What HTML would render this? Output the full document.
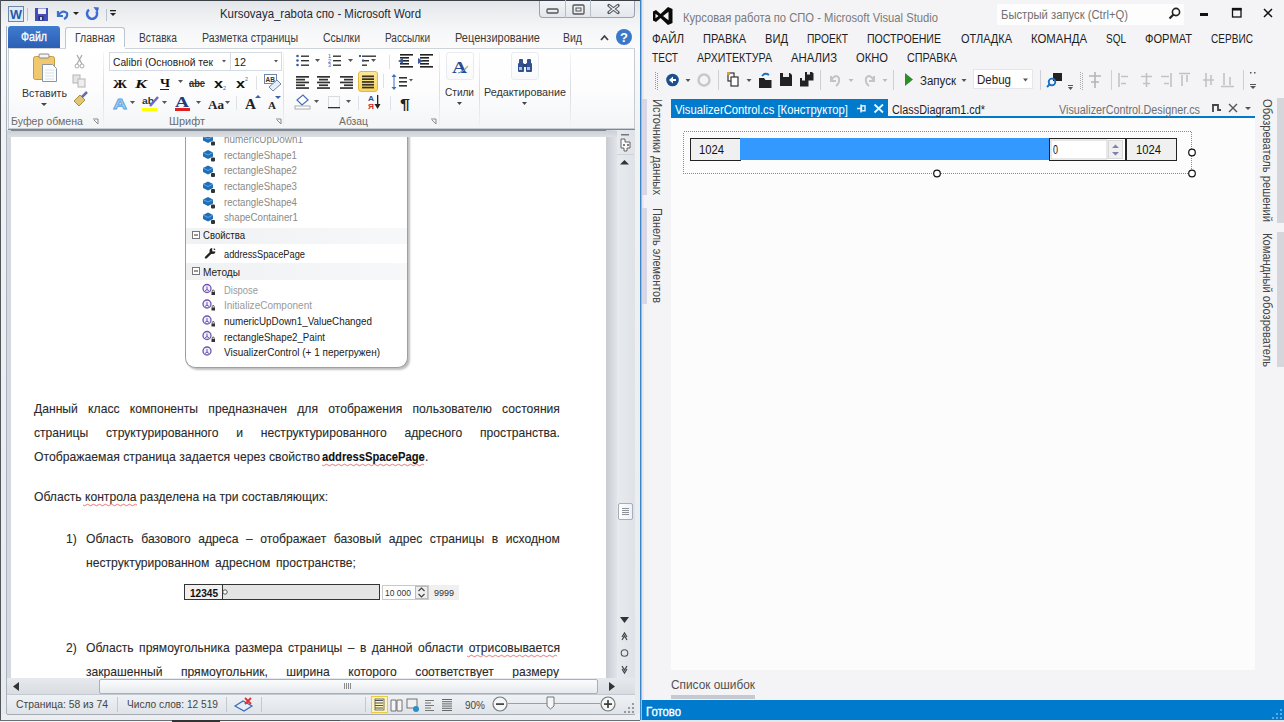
<!DOCTYPE html>
<html><head><meta charset="utf-8">
<style>
*{margin:0;padding:0;box-sizing:border-box}
html,body{width:1284px;height:722px;overflow:hidden;background:#fff;font-family:"Liberation Sans",sans-serif}
.a{position:absolute}
svg{position:absolute;left:0;top:0}
</style></head><body>
<div class="a" style="left:0px;top:0px;width:641px;height:722px;background:linear-gradient(#e3e6e9,#f6f7f8 30px,#fbfbfc 48px,#f0f2f4 130px,#e8ebee);"></div>
<div class="a" style="left:0px;top:0px;width:641px;height:1px;background:#3a4048"></div>
<div class="a" style="left:0px;top:0px;width:1px;height:722px;background:#50565c"></div>
<div class="a" style="left:6px;top:26px;width:1px;height:693px;background:#a9b2bd"></div>
<div class="a" style="left:539px;top:1px;width:96px;height:17px;background:linear-gradient(#f2f4f7,#e3e7ec);border:1px solid #9aa4b0;border-top:none;border-radius:0 0 4px 4px"></div>
<div class="a" style="left:565px;top:0px;width:1px;height:18px;background:#b5bdc7"></div>
<div class="a" style="left:590px;top:0px;width:1px;height:18px;background:#b5bdc7"></div>
<div class="a" style="left:27px;top:8px;width:1px;height:13px;background:#b9c1cb"></div>
<div class="a" style="left:106px;top:9px;width:1px;height:12px;background:#b9c1cb"></div>
<div class="a" style="left:8px;top:26px;width:52px;height:22px;background:linear-gradient(#3f7bd0,#2b5fb4);border-radius:3px 3px 0 0"></div>
<div class="a" style="left:65px;top:27px;width:60px;height:22px;background:linear-gradient(#fafbfc,#ffffff);border:1px solid #bcc5d0;border-bottom:none;border-radius:3px 3px 0 0"></div>
<div class="a" style="left:8px;top:48px;width:627px;height:81px;background:linear-gradient(#ffffff,#fdfdfe 50%,#f3f5f7);border:1px solid #c6ccd3;border-top:1px solid #cfd4da"></div>
<div class="a" style="left:8px;top:129px;width:627px;height:1.5px;background:#80868e"></div>
<div class="a" style="left:65.5px;top:47px;width:59px;height:2.5px;background:#fff"></div>
<div class="a" style="left:103px;top:52px;width:1px;height:75px;background:linear-gradient(#f4f6f8,#d7dde4 50%,#f0f2f5)"></div>
<div class="a" style="left:283px;top:52px;width:1px;height:75px;background:linear-gradient(#f4f6f8,#d7dde4 50%,#f0f2f5)"></div>
<div class="a" style="left:439px;top:52px;width:1px;height:75px;background:linear-gradient(#f4f6f8,#d7dde4 50%,#f0f2f5)"></div>
<div class="a" style="left:479px;top:52px;width:1px;height:75px;background:linear-gradient(#f4f6f8,#d7dde4 50%,#f0f2f5)"></div>
<div class="a" style="left:570px;top:52px;width:1px;height:75px;background:linear-gradient(#f4f6f8,#d7dde4 50%,#f0f2f5)"></div>
<div class="a" style="left:109px;top:52px;width:122px;height:19px;background:#fff;border:1px solid #d5dbe2"></div>
<div class="a" style="left:231px;top:52px;width:51px;height:19px;background:#fff;border:1px solid #d5dbe2;border-left:none"></div>
<div class="a" style="left:160px;top:89px;width:9px;height:1px;background:#222"></div>
<div class="a" style="left:189px;top:83px;width:16px;height:1px;background:#333"></div>
<div class="a" style="left:256px;top:76px;width:1px;height:14px;background:#dde2e8"></div>
<div class="a" style="left:142px;top:108px;width:15px;height:3px;background:#ffff00"></div>
<div class="a" style="left:175px;top:108px;width:15px;height:3px;background:#e02020"></div>
<div class="a" style="left:236px;top:96px;width:1px;height:14px;background:#dde2e8"></div>
<div class="a" style="left:389px;top:55px;width:1px;height:14px;background:#dde2e8"></div>
<div class="a" style="left:358px;top:71px;width:20px;height:21px;background:linear-gradient(#fde89a,#f9d660);border:1px solid #e2b93d;border-radius:3px"></div>
<div class="a" style="left:383px;top:74px;width:1px;height:14px;background:#dde2e8"></div>
<div class="a" style="left:358px;top:96px;width:1px;height:14px;background:#dde2e8"></div>
<div class="a" style="left:390px;top:96px;width:1px;height:14px;background:#dde2e8"></div>
<div class="a" style="left:446px;top:52px;width:28px;height:28px;background:linear-gradient(#fff,#f8f9fb);border:1px solid #e8ebef;border-radius:3px"></div>
<div class="a" style="left:511px;top:52px;width:28px;height:28px;background:linear-gradient(#fff,#f8f9fb);border:1px solid #e8ebef;border-radius:3px"></div>
<div class="a" style="left:7px;top:130px;width:4px;height:548px;background:#d5d9df"></div>
<div class="a" style="left:11px;top:137px;width:595px;height:541px;background:#fff"></div>
<div class="a" style="left:606px;top:130px;width:11px;height:548px;background:linear-gradient(90deg,#c8ccd2,#e1e4e8)"></div>
<div class="a" style="left:617px;top:130px;width:18px;height:548px;background:linear-gradient(90deg,#e7eaee,#dfe3e8)"></div>
<div class="a" style="left:617px;top:154px;width:17px;height:1px;background:#d0d4d9"></div>
<div class="a" style="left:618px;top:503px;width:15px;height:17px;background:linear-gradient(90deg,#fff,#eef1f4);border:1px solid #a5adb8;border-radius:2px"></div>
<div class="a" style="left:185px;top:134px;width:223px;height:234px;background:#fff;border:1px solid #9aa0a6;border-top:none;border-radius:0 0 10px 10px;box-shadow:2px 2px 2px rgba(0,0,0,0.25)"></div>
<div class="a" style="left:186px;top:228px;width:221px;height:16px;background:linear-gradient(90deg,#f0f1f3,#f7f8f9)"></div>
<div class="a" style="left:186px;top:263px;width:221px;height:17px;background:linear-gradient(90deg,#f0f1f3,#f7f8f9)"></div>
<div class="a" style="left:34px;top:402.33px;width:571.74px;font-size:13.2px;line-height:13.2px;white-space:nowrap;display:flex;justify-content:space-between;color:#2a2a2a;transform:scaleX(0.92);transform-origin:0 0;-webkit-text-stroke:0.1px #2a2a2a"><span>Данный</span><span>класс</span><span>компоненты</span><span>предназначен</span><span>для</span><span>отображения</span><span>пользователю</span><span>состояния</span></div>
<div class="a" style="left:34px;top:426.33px;width:571.74px;font-size:13.2px;line-height:13.2px;white-space:nowrap;display:flex;justify-content:space-between;color:#2a2a2a;transform:scaleX(0.92);transform-origin:0 0;-webkit-text-stroke:0.1px #2a2a2a"><span>страницы</span><span>структурированного</span><span>и</span><span>неструктурированного</span><span>адресного</span><span>пространства.</span></div>
<div class="a" style="left:34px;top:450.33px;width:308.86px;font-size:13.2px;line-height:13.2px;white-space:nowrap;color:#2a2a2a;font-weight:normal;transform:scaleX(0.926);transform-origin:0 0;-webkit-text-stroke:0.1px #2a2a2a">Отображаемая страница задается через свойство</div>
<div class="a" style="left:322px;top:450.33px;width:121.18px;font-size:13.2px;line-height:13.2px;white-space:nowrap;color:#111;font-weight:bold;transform:scaleX(0.85);transform-origin:0 0;-webkit-text-stroke:0.1px #111">addressSpacePage</div>
<div class="a" style="left:425px;top:450.33px;width:3.26px;font-size:13.2px;line-height:13.2px;white-space:nowrap;color:#2a2a2a;font-weight:normal;transform:scaleX(0.92);transform-origin:0 0;-webkit-text-stroke:0.1px #2a2a2a">.</div>
<div class="a" style="left:34px;top:490.33px;width:319.57px;font-size:13.2px;line-height:13.2px;white-space:nowrap;color:#2a2a2a;font-weight:normal;transform:scaleX(0.92);transform-origin:0 0;-webkit-text-stroke:0.1px #2a2a2a">Область контрола разделена на три составляющих:</div>
<div class="a" style="left:66px;top:531.83px;width:10.87px;font-size:13.2px;line-height:13.2px;white-space:nowrap;color:#2a2a2a;font-weight:normal;transform:scaleX(0.92);transform-origin:0 0;-webkit-text-stroke:0.1px #2a2a2a">1)</div>
<div class="a" style="left:86px;top:531.83px;width:515.22px;font-size:13.2px;line-height:13.2px;white-space:nowrap;display:flex;justify-content:space-between;color:#2a2a2a;transform:scaleX(0.92);transform-origin:0 0;-webkit-text-stroke:0.1px #2a2a2a"><span>Область</span><span>базового</span><span>адреса</span><span>–</span><span>отображает</span><span>базовый</span><span>адрес</span><span>страницы</span><span>в</span><span>исходном</span></div>
<div class="a" style="left:86px;top:556.33px;width:293.48px;font-size:13.2px;line-height:13.2px;white-space:nowrap;display:flex;justify-content:space-between;color:#2a2a2a;transform:scaleX(0.92);transform-origin:0 0;-webkit-text-stroke:0.1px #2a2a2a"><span>неструктурированном</span><span>адресном</span><span>пространстве;</span></div>
<div class="a" style="left:66px;top:640.83px;width:10.87px;font-size:13.2px;line-height:13.2px;white-space:nowrap;color:#2a2a2a;font-weight:normal;transform:scaleX(0.92);transform-origin:0 0;-webkit-text-stroke:0.1px #2a2a2a">2)</div>
<div class="a" style="left:86px;top:640.83px;width:515.22px;font-size:13.2px;line-height:13.2px;white-space:nowrap;display:flex;justify-content:space-between;color:#2a2a2a;transform:scaleX(0.92);transform-origin:0 0;-webkit-text-stroke:0.1px #2a2a2a"><span>Область</span><span>прямоугольника</span><span>размера</span><span>страницы</span><span>–</span><span>в</span><span>данной</span><span>области</span><span>отрисовывается</span></div>
<div class="a" style="left:86px;top:664.83px;width:514.13px;font-size:13.2px;line-height:13.2px;white-space:nowrap;display:flex;justify-content:space-between;color:#2a2a2a;transform:scaleX(0.92);transform-origin:0 0;-webkit-text-stroke:0.1px #2a2a2a"><span>закрашенный</span><span>прямоугольник,</span><span>ширина</span><span>которого</span><span>соответствует</span><span>размеру</span></div>
<div class="a" style="left:184px;top:584px;width:196px;height:16px;background:#e4e4e4;border:1px solid #333"></div>
<div class="a" style="left:184px;top:584px;width:39px;height:16px;background:#f0f0f0;border:1px solid #333"></div>
<div class="a" style="left:382px;top:585px;width:47px;height:15px;background:#fff;border:1px solid #c9c9c9"></div>
<div class="a" style="left:415px;top:586px;width:13px;height:13px;background:#eee;border:1px solid #bbb"></div>
<div class="a" style="left:429px;top:585px;width:30px;height:15px;background:#f0f0f0"></div>
<div class="a" style="left:7px;top:678px;width:628px;height:16px;background:linear-gradient(#e6e9ed,#d9dde2)"></div>
<div class="a" style="left:99px;top:679px;width:499px;height:15px;background:linear-gradient(#fbfcfd,#e7eaee);border:1px solid #a9b0b9;border-radius:2px"></div>
<div class="a" style="left:344px;top:683px;width:1px;height:6px;background:#8a8a8a"></div>
<div class="a" style="left:346px;top:683px;width:1px;height:6px;background:#8a8a8a"></div>
<div class="a" style="left:348px;top:683px;width:1px;height:6px;background:#8a8a8a"></div>
<div class="a" style="left:350px;top:683px;width:1px;height:6px;background:#8a8a8a"></div>
<div class="a" style="left:7px;top:694px;width:628px;height:20px;background:linear-gradient(#eff2f5,#dfe3e8);border-top:1px solid #c2c9d1"></div>
<div class="a" style="left:117px;top:697px;width:1px;height:15px;background:#c3c9d0"></div>
<div class="a" style="left:226px;top:697px;width:1px;height:15px;background:#c3c9d0"></div>
<div class="a" style="left:365px;top:697px;width:1px;height:15px;background:#c3c9d0"></div>
<div class="a" style="left:261px;top:697px;width:1px;height:15px;background:#c3c9d0"></div>
<div class="a" style="left:371px;top:696px;width:17px;height:17px;background:#fbf3c0;border:1px solid #e8cc3e"></div>
<div class="a" style="left:508px;top:703px;width:92px;height:1px;background:#9aa0a8"></div>
<div class="a" style="left:632px;top:703px;width:1.5px;height:1.5px;background:#999"></div>
<div class="a" style="left:632px;top:707px;width:1.5px;height:1.5px;background:#999"></div>
<div class="a" style="left:628px;top:707px;width:1.5px;height:1.5px;background:#999"></div>
<div class="a" style="left:632px;top:711px;width:1.5px;height:1.5px;background:#999"></div>
<div class="a" style="left:628px;top:711px;width:1.5px;height:1.5px;background:#999"></div>
<div class="a" style="left:624px;top:711px;width:1.5px;height:1.5px;background:#999"></div>
<div class="a" style="left:1px;top:714px;width:639px;height:6px;background:#eceef1"></div>
<div class="a" style="left:7px;top:713.5px;width:628px;height:1px;background:#a5acb4"></div>
<div class="a" style="left:0px;top:720px;width:641px;height:1px;background:#6a7077"></div>
<div class="a" style="left:0px;top:721px;width:641px;height:1px;background:#f4f5f7"></div>
<div class="a" style="left:172px;top:720px;width:48px;height:2px;background:#333"></div>
<div class="a" style="left:220px;top:720px;width:120px;height:1px;background:#555"></div>
<div class="a" style="left:641px;top:0px;width:643px;height:722px;background:#f4f4f6"></div>
<div class="a" style="left:640px;top:0px;width:1px;height:722px;background:#3a86c8"></div>
<div class="a" style="left:641px;top:0px;width:1px;height:722px;background:#8cc4ee"></div>
<div class="a" style="left:642px;top:0px;width:2px;height:700px;background:linear-gradient(90deg,#e8e2f0,#eeeef2)"></div>
<div class="a" style="left:997px;top:4px;width:187px;height:21px;background:#fdfdfe"></div>
<div class="a" style="left:1200px;top:13px;width:8px;height:3px;background:#111"></div>
<div class="a" style="left:655px;top:72px;width:1px;height:1px;background:#999"></div>
<div class="a" style="left:657px;top:73px;width:1px;height:1px;background:#999"></div>
<div class="a" style="left:655px;top:74px;width:1px;height:1px;background:#999"></div>
<div class="a" style="left:657px;top:75px;width:1px;height:1px;background:#999"></div>
<div class="a" style="left:655px;top:76px;width:1px;height:1px;background:#999"></div>
<div class="a" style="left:657px;top:77px;width:1px;height:1px;background:#999"></div>
<div class="a" style="left:655px;top:78px;width:1px;height:1px;background:#999"></div>
<div class="a" style="left:657px;top:79px;width:1px;height:1px;background:#999"></div>
<div class="a" style="left:655px;top:80px;width:1px;height:1px;background:#999"></div>
<div class="a" style="left:657px;top:81px;width:1px;height:1px;background:#999"></div>
<div class="a" style="left:655px;top:82px;width:1px;height:1px;background:#999"></div>
<div class="a" style="left:657px;top:83px;width:1px;height:1px;background:#999"></div>
<div class="a" style="left:655px;top:84px;width:1px;height:1px;background:#999"></div>
<div class="a" style="left:657px;top:85px;width:1px;height:1px;background:#999"></div>
<div class="a" style="left:655px;top:86px;width:1px;height:1px;background:#999"></div>
<div class="a" style="left:657px;top:87px;width:1px;height:1px;background:#999"></div>
<div class="a" style="left:655px;top:88px;width:1px;height:1px;background:#999"></div>
<div class="a" style="left:657px;top:89px;width:1px;height:1px;background:#999"></div>
<div class="a" style="left:718px;top:70px;width:1px;height:20px;background:#cfcfd4"></div>
<div class="a" style="left:820px;top:70px;width:1px;height:20px;background:#cfcfd4"></div>
<div class="a" style="left:893px;top:70px;width:1px;height:20px;background:#cfcfd4"></div>
<div class="a" style="left:973px;top:69px;width:60px;height:20px;background:#fff;border:1px solid #e6e6ea"></div>
<div class="a" style="left:1040px;top:70px;width:1px;height:20px;background:#cfcfd4"></div>
<div class="a" style="left:1080px;top:72px;width:1px;height:1px;background:#aaa"></div>
<div class="a" style="left:1082px;top:73px;width:1px;height:1px;background:#aaa"></div>
<div class="a" style="left:1080px;top:74px;width:1px;height:1px;background:#aaa"></div>
<div class="a" style="left:1082px;top:75px;width:1px;height:1px;background:#aaa"></div>
<div class="a" style="left:1080px;top:76px;width:1px;height:1px;background:#aaa"></div>
<div class="a" style="left:1082px;top:77px;width:1px;height:1px;background:#aaa"></div>
<div class="a" style="left:1080px;top:78px;width:1px;height:1px;background:#aaa"></div>
<div class="a" style="left:1082px;top:79px;width:1px;height:1px;background:#aaa"></div>
<div class="a" style="left:1080px;top:80px;width:1px;height:1px;background:#aaa"></div>
<div class="a" style="left:1082px;top:81px;width:1px;height:1px;background:#aaa"></div>
<div class="a" style="left:1080px;top:82px;width:1px;height:1px;background:#aaa"></div>
<div class="a" style="left:1082px;top:83px;width:1px;height:1px;background:#aaa"></div>
<div class="a" style="left:1080px;top:84px;width:1px;height:1px;background:#aaa"></div>
<div class="a" style="left:1082px;top:85px;width:1px;height:1px;background:#aaa"></div>
<div class="a" style="left:1080px;top:86px;width:1px;height:1px;background:#aaa"></div>
<div class="a" style="left:1082px;top:87px;width:1px;height:1px;background:#aaa"></div>
<div class="a" style="left:1080px;top:88px;width:1px;height:1px;background:#aaa"></div>
<div class="a" style="left:1082px;top:89px;width:1px;height:1px;background:#aaa"></div>
<div class="a" style="left:1111px;top:70px;width:1px;height:20px;background:#cfcfd4"></div>
<div class="a" style="left:1243px;top:70px;width:1px;height:20px;background:#cfcfd4"></div>
<div class="a" style="left:642px;top:99px;width:5px;height:96px;background:#d9d7e6"></div>
<div class="a" style="left:642px;top:208px;width:5px;height:96px;background:#d9d7e6"></div>
<div class="a" style="left:1277px;top:98px;width:7px;height:125px;background:#d5d5dc"></div>
<div class="a" style="left:1277px;top:232px;width:7px;height:135px;background:#d5d5dc"></div>
<div class="a" style="left:671px;top:99px;width:217px;height:19px;background:#007acc"></div>
<div class="a" style="left:671px;top:116px;width:584px;height:2px;background:#007acc"></div>
<div class="a" style="left:671px;top:118px;width:584px;height:552px;background:#fcfcfd"></div>
<div class="a" style="left:671px;top:695px;width:84px;height:4px;background:#c8c8d0"></div>
<div class="a" style="left:642px;top:700px;width:642px;height:20px;background:#007acc"></div>
<div class="a" style="left:640px;top:720px;width:644px;height:2px;background:#e6e6e9"></div>
<div class="a" style="left:1280px;top:709px;width:1.5px;height:1.5px;background:#5fa8e0"></div>
<div class="a" style="left:1280px;top:713px;width:1.5px;height:1.5px;background:#5fa8e0"></div>
<div class="a" style="left:1276px;top:713px;width:1.5px;height:1.5px;background:#5fa8e0"></div>
<div class="a" style="left:1280px;top:717px;width:1.5px;height:1.5px;background:#5fa8e0"></div>
<div class="a" style="left:1276px;top:717px;width:1.5px;height:1.5px;background:#5fa8e0"></div>
<div class="a" style="left:1272px;top:717px;width:1.5px;height:1.5px;background:#5fa8e0"></div>
<div class="a" style="left:690px;top:138px;width:51px;height:23px;background:#f0f0f0;border:1px solid #222"></div>
<div class="a" style="left:740px;top:138px;width:309px;height:22px;background:#3399ff"></div>
<div class="a" style="left:1049px;top:138px;width:77px;height:23px;background:#fff;border:1px solid #222"></div>
<div class="a" style="left:1108px;top:140px;width:15px;height:19px;background:#f0f0f0;border:1px solid #d8d8d8"></div>
<div class="a" style="left:1126px;top:138px;width:51px;height:23px;background:#f0f0f0;border:1px solid #222"></div>
<svg width="1284" height="722">
<text x="220" y="18" font-family="Liberation Sans" font-size="12" fill="#1e2936" font-weight="normal" textLength="201" lengthAdjust="spacingAndGlyphs" >Kursovaya_rabota спо  -  Microsoft Word</text>
<rect x="547" y="9" width="11" height="4" fill="none" stroke="#555" stroke-width="1.3" rx="1"/>
<rect x="573" y="5" width="11" height="9" fill="none" stroke="#555" stroke-width="1.3" rx="1"/><rect x="576" y="8" width="5" height="3" fill="none" stroke="#555" stroke-width="1"/>
<path d="M609 5.5 L618 12.5 M618 5.5 L609 12.5" stroke="#505860" stroke-width="3.4" stroke-linecap="round"/><path d="M609 5.5 L618 12.5 M618 5.5 L609 12.5" stroke="#f2f4f6" stroke-width="1.1"/>
<rect x="8.5" y="6.5" width="15" height="15" fill="#dfeaf8" stroke="#6e88a8"/><text x="10" y="19" font-family="Liberation Sans" font-weight="bold" font-size="13" fill="#2559a8" textLength="12" lengthAdjust="spacingAndGlyphs">W</text>
<rect x="35" y="8" width="13" height="13" fill="#4450b8"/><rect x="38" y="8.5" width="8" height="5.5" fill="#eef1f8"/><rect x="38.5" y="16" width="5" height="4.5" fill="#2a2f70"/><rect x="40" y="17" width="2" height="3" fill="#d0d4e8"/>
<path d="M58 11 L58 16 L63 16" fill="none" stroke="#3a6fd0" stroke-width="2.2"/><path d="M58 16 Q62 9 67 13 Q68 17 64 19" fill="none" stroke="#3a6fd0" stroke-width="2.2"/>
<path d="M73 12 L79 12 L76 15 Z" fill="#222"/>
<path d="M89 9.8 A5 5 0 1 0 96.5 11.5" fill="none" stroke="#3d6ad6" stroke-width="2.6"/><path d="M93.5 7 L99 7.5 L97.5 13 Z" fill="#3d6ad6"/>
<rect x="110" y="10" width="6" height="1.3" fill="#222"/><path d="M110 13 L116 13 L113 16 Z" fill="#222"/>
<text x="21" y="41" font-family="Liberation Sans" font-size="12" fill="#fff" font-weight="normal" textLength="26" lengthAdjust="spacingAndGlyphs" stroke="#fff" stroke-width="0.3">Файл</text>
<text x="75" y="42" font-family="Liberation Sans" font-size="12" fill="#3b3b3b" font-weight="normal" textLength="40" lengthAdjust="spacingAndGlyphs" >Главная</text>
<text x="139" y="42" font-family="Liberation Sans" font-size="12" fill="#3b3b3b" font-weight="normal" textLength="38" lengthAdjust="spacingAndGlyphs" >Вставка</text>
<text x="202" y="42" font-family="Liberation Sans" font-size="12" fill="#3b3b3b" font-weight="normal" textLength="96" lengthAdjust="spacingAndGlyphs" >Разметка страницы</text>
<text x="323" y="42" font-family="Liberation Sans" font-size="12" fill="#3b3b3b" font-weight="normal" textLength="37" lengthAdjust="spacingAndGlyphs" >Ссылки</text>
<text x="385" y="42" font-family="Liberation Sans" font-size="12" fill="#3b3b3b" font-weight="normal" textLength="45" lengthAdjust="spacingAndGlyphs" >Рассылки</text>
<text x="455" y="42" font-family="Liberation Sans" font-size="12" fill="#3b3b3b" font-weight="normal" textLength="85" lengthAdjust="spacingAndGlyphs" >Рецензирование</text>
<text x="563" y="42" font-family="Liberation Sans" font-size="12" fill="#3b3b3b" font-weight="normal" textLength="19" lengthAdjust="spacingAndGlyphs" >Вид</text>
<path d="M601 40 L604.5 36 L608 40" fill="none" stroke="#444" stroke-width="1.8"/>
<circle cx="624" cy="37" r="8" fill="#3b78c8"/><text x="620" y="42" font-family="Liberation Sans" font-weight="bold" font-size="13" fill="#fff">?</text>
<text x="11" y="125" font-family="Liberation Sans" font-size="11" fill="#6b6b6b" font-weight="normal" textLength="72" lengthAdjust="spacingAndGlyphs" >Буфер обмена</text>
<text x="169" y="125" font-family="Liberation Sans" font-size="11" fill="#6b6b6b" font-weight="normal" textLength="36" lengthAdjust="spacingAndGlyphs" >Шрифт</text>
<text x="339" y="125" font-family="Liberation Sans" font-size="11" fill="#6b6b6b" font-weight="normal" textLength="29" lengthAdjust="spacingAndGlyphs" >Абзац</text>
<path d="M93 119 h5 v5" fill="none" stroke="#8a8a8a" stroke-width="1"/><path d="M94 120 l4 4" stroke="#8a8a8a"/>
<path d="M276 119 h5 v5" fill="none" stroke="#8a8a8a" stroke-width="1"/><path d="M277 120 l4 4" stroke="#8a8a8a"/>
<path d="M431 119 h5 v5" fill="none" stroke="#8a8a8a" stroke-width="1"/><path d="M432 120 l4 4" stroke="#8a8a8a"/>
<rect x="33.5" y="56.5" width="21" height="23" rx="2" fill="#f0c870" stroke="#c99a3a"/><rect x="39" y="54" width="10" height="4" rx="1" fill="#f4f4f4" stroke="#888"/>
<path d="M42.5 64.5 h10 l4 4 v13 h-14 z" fill="#fbfcfe" stroke="#8b96a3"/><path d="M45 70h9M45 73h9M45 76h9M45 79h9" stroke="#d5dae2" stroke-width="0.8"/>
<text x="22" y="97" font-family="Liberation Sans" font-size="11" fill="#333" font-weight="normal" textLength="45" lengthAdjust="spacingAndGlyphs" >Вставить</text>
<path d="M41 103 L47 103 L44 106 Z" fill="#444"/>
<path d="M77 55 L82 64 M82 55 L77 64" stroke="#aaa" stroke-width="1.3"/><circle cx="77" cy="66" r="2" fill="none" stroke="#aaa"/><circle cx="82" cy="66" r="2" fill="none" stroke="#aaa"/>
<rect x="73" y="75" width="7" height="8" fill="#e5e5e5" stroke="#b5b5b5"/><rect x="78" y="79" width="7" height="8" fill="#eee" stroke="#b5b5b5"/>
<path d="M74 101 L80 95 L85 100 L79 106 Z" fill="#e0c777" stroke="#a89040"/><path d="M82 97 L87 92" stroke="#6a6aa8" stroke-width="2.5"/>
<text x="113" y="66" font-family="Liberation Sans" font-size="11" fill="#222" font-weight="normal" textLength="100" lengthAdjust="spacingAndGlyphs" >Calibri (Основной тек</text>
<text x="234" y="66" font-family="Liberation Sans" font-size="11" fill="#222" font-weight="normal" textLength="12" lengthAdjust="spacingAndGlyphs" >12</text>
<path d="M222 60 L226 60 L224 62.5 Z" fill="#555"/><path d="M274 60 L278 60 L276 62.5 Z" fill="#555"/>
<text x="113" y="88" font-family="Liberation Serif" font-size="13" fill="#111" font-weight="bold" textLength="14" lengthAdjust="spacingAndGlyphs" >Ж</text>
<text x="135" y="88" font-family="Liberation Serif" font-size="13" fill="#111" font-weight="bold" textLength="12" lengthAdjust="spacingAndGlyphs" font-style="italic">К</text>
<text x="160" y="87" font-family="Liberation Serif" font-size="12" fill="#111" font-weight="bold" textLength="10" lengthAdjust="spacingAndGlyphs" >Ч</text>
<path d="M178 80 L183 80 L180.5 83 Z" fill="#555"/>
<text x="189" y="87" font-family="Liberation Sans" font-size="11" fill="#333" font-weight="bold" textLength="16" lengthAdjust="spacingAndGlyphs" >abe</text>
<text x="214" y="88" font-family="Liberation Sans" font-size="13" fill="#111" font-weight="bold" textLength="9" lengthAdjust="spacingAndGlyphs" >x</text>
<text x="223" y="90" font-family="Liberation Sans" font-size="6" fill="#4466aa" font-weight="normal" textLength="3" lengthAdjust="spacingAndGlyphs" >2</text>
<text x="236" y="88" font-family="Liberation Sans" font-size="13" fill="#111" font-weight="bold" textLength="9" lengthAdjust="spacingAndGlyphs" >x</text>
<text x="245" y="81" font-family="Liberation Sans" font-size="6" fill="#4466aa" font-weight="normal" textLength="3" lengthAdjust="spacingAndGlyphs" >2</text>
<rect x="264.5" y="74.5" width="12" height="9" fill="#fff" stroke="#6e86a8"/><text x="265.5" y="82" font-family="Liberation Sans" font-size="6.5" font-weight="bold" fill="#333">AB</text><path d="M269 87 L277 80 L281 84 L273 91 Z" fill="#e6eef9" stroke="#6e86a8"/>
<text x="113" y="109" font-family="Liberation Sans" font-size="15" fill="#a8d4f5" font-weight="bold" textLength="14" lengthAdjust="spacingAndGlyphs" stroke="#5aa3dc" stroke-width="0.8">A</text>
<path d="M130 101 L135 101 L132.5 104 Z" fill="#555"/>
<text x="142" y="104" font-family="Liberation Sans" font-size="9" fill="#333" font-weight="bold" textLength="12" lengthAdjust="spacingAndGlyphs" >ab</text>
<path d="M150 106 L158 97" stroke="#6b6bc0" stroke-width="2.5"/>
<path d="M162 101 L167 101 L164.5 104 Z" fill="#555"/>
<text x="175" y="107" font-family="Liberation Serif" font-size="15" fill="#1f3b80" font-weight="bold" textLength="14" lengthAdjust="spacingAndGlyphs" >A</text>
<path d="M196 101 L201 101 L198.5 104 Z" fill="#555"/>
<text x="208" y="109" font-family="Liberation Serif" font-size="13" fill="#222" font-weight="bold" textLength="16" lengthAdjust="spacingAndGlyphs" >Aa</text>
<path d="M225 101 L230 101 L227.5 104 Z" fill="#555"/>
<text x="245" y="109" font-family="Liberation Serif" font-size="14" fill="#222" font-weight="bold" textLength="11" lengthAdjust="spacingAndGlyphs" >A</text>
<path d="M255 98 L258 95 L261 98 Z" fill="#3b5fa8"/>
<text x="268" y="109" font-family="Liberation Serif" font-size="11" fill="#222" font-weight="bold" textLength="8" lengthAdjust="spacingAndGlyphs" >A</text>
<path d="M275 96 L281 96 L278 99 Z" fill="#3b5fa8"/>
<circle cx="297.5" cy="56.0" r="1.3" fill="#3c5a9c"/>
<circle cx="297.5" cy="60.5" r="1.3" fill="#3c5a9c"/>
<circle cx="297.5" cy="65.0" r="1.3" fill="#3c5a9c"/>
<rect x="301" y="55.5" width="8" height="1.4" fill="#333"/>
<rect x="301" y="60.0" width="8" height="1.4" fill="#333"/>
<rect x="301" y="64.5" width="8" height="1.4" fill="#333"/>
<path d="M315 59 L320 59 L317.5 62 Z" fill="#555"/>
<text x="328" y="58.0" font-family="Liberation Sans" font-size="4.5" fill="#3c5a9c" font-weight="normal" textLength="3" lengthAdjust="spacingAndGlyphs" >1</text>
<text x="328" y="62.5" font-family="Liberation Sans" font-size="4.5" fill="#3c5a9c" font-weight="normal" textLength="3" lengthAdjust="spacingAndGlyphs" >2</text>
<text x="328" y="67.0" font-family="Liberation Sans" font-size="4.5" fill="#3c5a9c" font-weight="normal" textLength="3" lengthAdjust="spacingAndGlyphs" >3</text>
<rect x="333" y="55.5" width="8" height="1.4" fill="#333"/>
<rect x="333" y="60.0" width="8" height="1.4" fill="#333"/>
<rect x="333" y="64.5" width="8" height="1.4" fill="#333"/>
<path d="M348 59 L353 59 L350.5 62 Z" fill="#555"/>
<rect x="362" y="55.5" width="14" height="1.4" fill="#333"/>
<rect x="362" y="60.0" width="7" height="1.4" fill="#333"/>
<rect x="362" y="64.5" width="5" height="1.4" fill="#333"/>
<rect x="359" y="55" width="2" height="2" fill="#3c5a9c"/><rect x="362" y="59.5" width="2" height="2" fill="#3c5a9c"/>
<path d="M371 59 L376 59 L373.5 62 Z" fill="#555"/>
<rect x="400" y="54" width="13" height="1.6" fill="#222"/>
<rect x="400" y="57" width="9" height="1.6" fill="#222"/>
<rect x="400" y="60" width="9" height="1.6" fill="#222"/>
<rect x="400" y="63" width="9" height="1.6" fill="#222"/>
<rect x="400" y="66" width="13" height="1.6" fill="#222"/>
<path d="M398 61 L403 58 L403 64 Z" fill="#3c5a9c"/>
<rect x="420" y="54" width="13" height="1.6" fill="#222"/>
<rect x="420" y="57" width="9" height="1.6" fill="#222"/>
<rect x="420" y="60" width="9" height="1.6" fill="#222"/>
<rect x="420" y="63" width="9" height="1.6" fill="#222"/>
<rect x="420" y="66" width="13" height="1.6" fill="#222"/>
<path d="M423 61 L418 58 L418 64 Z" fill="#3c5a9c"/>
<rect x="296" y="76.0" width="13" height="1.7" fill="#333"/>
<rect x="296" y="78.8" width="9" height="1.7" fill="#333"/>
<rect x="296" y="81.6" width="13" height="1.7" fill="#333"/>
<rect x="296" y="84.4" width="9" height="1.7" fill="#333"/>
<rect x="296" y="87.2" width="13" height="1.7" fill="#333"/>
<rect x="317.0" y="76.0" width="13" height="1.7" fill="#333"/>
<rect x="319.0" y="78.8" width="9" height="1.7" fill="#333"/>
<rect x="317.0" y="81.6" width="13" height="1.7" fill="#333"/>
<rect x="319.0" y="84.4" width="9" height="1.7" fill="#333"/>
<rect x="317.0" y="87.2" width="13" height="1.7" fill="#333"/>
<rect x="340" y="76.0" width="13" height="1.7" fill="#333"/>
<rect x="344" y="78.8" width="9" height="1.7" fill="#333"/>
<rect x="340" y="81.6" width="13" height="1.7" fill="#333"/>
<rect x="344" y="84.4" width="9" height="1.7" fill="#333"/>
<rect x="340" y="87.2" width="13" height="1.7" fill="#333"/>
<rect x="362" y="75.5" width="12" height="1.7" fill="#3a3020"/>
<rect x="362" y="78.3" width="12" height="1.7" fill="#3a3020"/>
<rect x="362" y="81.1" width="12" height="1.7" fill="#3a3020"/>
<rect x="362" y="83.9" width="12" height="1.7" fill="#3a3020"/>
<rect x="362" y="86.7" width="12" height="1.7" fill="#3a3020"/>
<path d="M394 74 L396.5 77 L391.5 77 Z M394 90 L396.5 87 L391.5 87 Z" fill="#3c6fc0"/><rect x="393.5" y="77" width="1" height="10" fill="#3c6fc0"/>
<rect x="399" y="77" width="8" height="1.6" fill="#333"/>
<rect x="399" y="81" width="8" height="1.6" fill="#333"/>
<rect x="399" y="85" width="8" height="1.6" fill="#333"/>
<path d="M409 79 L413 79 L411 81.5 Z" fill="#555"/>
<path d="M297 100 L303 95 L308 100 L302 105 Z" fill="#fff" stroke="#4a6fb8" stroke-width="1.2"/><rect x="295" y="106" width="15" height="3" fill="#fff" stroke="#999" stroke-width="0.8"/>
<path d="M314 100 L319 100 L316.5 103 Z" fill="#555"/>
<rect x="328.5" y="96.5" width="11" height="11" fill="none" stroke="#bbb" stroke-dasharray="1,1"/><rect x="328" y="107" width="12" height="1.3" fill="#333"/>
<path d="M346 100 L351 100 L348.5 103 Z" fill="#555"/>
<text x="368" y="101" font-family="Liberation Sans" font-size="7" fill="#3050a0" font-weight="bold" textLength="6" lengthAdjust="spacingAndGlyphs" >А</text>
<text x="368" y="109" font-family="Liberation Sans" font-size="7" fill="#cc3030" font-weight="bold" textLength="6" lengthAdjust="spacingAndGlyphs" >Я</text>
<rect x="377" y="95" width="1.3" height="11" fill="#222"/><path d="M374.5 104 L380.5 104 L377.6 109 Z" fill="#222"/>
<text x="400" y="109" font-family="Liberation Sans" font-size="15" fill="#222" font-weight="bold" textLength="10" lengthAdjust="spacingAndGlyphs" >¶</text>
<text x="452" y="73" font-family="Liberation Serif" font-size="17" fill="#2b4a8e" font-weight="bold" textLength="15" lengthAdjust="spacingAndGlyphs" >A</text>
<path d="M458 73 q5 -1 9 -6" fill="none" stroke="#6a8ec8" stroke-width="1.2"/><path d="M466 68 l2 -2" stroke="#c8c060" stroke-width="1.5"/>
<text x="445" y="96" font-family="Liberation Sans" font-size="11" fill="#333" font-weight="normal" textLength="29" lengthAdjust="spacingAndGlyphs" >Стили</text>
<path d="M457 102 L462 102 L459.5 105 Z" fill="#444"/>
<rect x="518" y="63" width="6" height="9" rx="1" fill="#34518f"/><rect x="526" y="63" width="6" height="9" rx="1" fill="#34518f"/><rect x="519" y="59" width="4" height="5" rx="1" fill="#34518f"/><rect x="527" y="59" width="4" height="5" rx="1" fill="#34518f"/><rect x="523" y="64" width="4" height="3" fill="#2b4478"/><rect x="519" y="67" width="3" height="3" fill="#a9c0e8"/><rect x="527" y="67" width="3" height="3" fill="#a9c0e8"/>
<text x="484" y="96" font-family="Liberation Sans" font-size="11" fill="#333" font-weight="normal" textLength="82" lengthAdjust="spacingAndGlyphs" >Редактирование</text>
<path d="M522 102 L527 102 L524.5 105 Z" fill="#444"/>
<rect x="621" y="134" width="8" height="1.5" fill="#777"/><path d="M621 139 h4 v3 h5 v6 h-3 v3 h-3 v-3 h-3 z" fill="#fafafa" stroke="#555" stroke-width="0.9"/><circle cx="624" cy="145" r="1" fill="#555"/><circle cx="628" cy="145" r="1" fill="#555"/>
<path d="M620 164.5 L629 164.5 L624.5 160 Z" fill="#333"/>
<rect x="622" y="508" width="7" height="1" fill="#8b9198"/>
<rect x="622" y="510" width="7" height="1" fill="#8b9198"/>
<rect x="622" y="512" width="7" height="1" fill="#8b9198"/>
<rect x="622" y="514" width="7" height="1" fill="#8b9198"/>
<path d="M620 617 L629 617 L624.5 623 Z" fill="#333"/>
<path d="M622 640 L624.5 636 L627 640 M622 637 L624.5 633 L627 637" fill="none" stroke="#444" stroke-width="1.2"/>
<circle cx="624.5" cy="653" r="3.3" fill="none" stroke="#555" stroke-width="1.1"/>
<path d="M622 666 L624.5 670 L627 666 M622 669 L624.5 673 L627 669" fill="none" stroke="#444" stroke-width="1.2"/>
<path d="M203 136.5 l5 -2.5 l5 2.5 l0 4 l-5 2.5 l-5 -2.5 z" fill="#1e6fb8"/><path d="M203 136.5 l5 2.5 l5 -2.5" fill="none" stroke="#7bb8ea" stroke-width="0.8"/><rect x="211" y="141.5" width="4" height="4" rx="1" fill="#333"/>
<text x="224" y="142.5" font-family="Liberation Sans" font-size="10" fill="#8a8a8a" font-weight="normal" textLength="79" lengthAdjust="spacingAndGlyphs" >numericUpDown1</text>
<path d="M203 152.5 l5 -2.5 l5 2.5 l0 4 l-5 2.5 l-5 -2.5 z" fill="#1e6fb8"/><path d="M203 152.5 l5 2.5 l5 -2.5" fill="none" stroke="#7bb8ea" stroke-width="0.8"/><rect x="211" y="157.5" width="4" height="4" rx="1" fill="#333"/>
<text x="224" y="158.5" font-family="Liberation Sans" font-size="10" fill="#8a8a8a" font-weight="normal" textLength="73" lengthAdjust="spacingAndGlyphs" >rectangleShape1</text>
<path d="M203 168 l5 -2.5 l5 2.5 l0 4 l-5 2.5 l-5 -2.5 z" fill="#1e6fb8"/><path d="M203 168 l5 2.5 l5 -2.5" fill="none" stroke="#7bb8ea" stroke-width="0.8"/><rect x="211" y="173" width="4" height="4" rx="1" fill="#333"/>
<text x="224" y="174" font-family="Liberation Sans" font-size="10" fill="#8a8a8a" font-weight="normal" textLength="73" lengthAdjust="spacingAndGlyphs" >rectangleShape2</text>
<path d="M203 184 l5 -2.5 l5 2.5 l0 4 l-5 2.5 l-5 -2.5 z" fill="#1e6fb8"/><path d="M203 184 l5 2.5 l5 -2.5" fill="none" stroke="#7bb8ea" stroke-width="0.8"/><rect x="211" y="189" width="4" height="4" rx="1" fill="#333"/>
<text x="224" y="190" font-family="Liberation Sans" font-size="10" fill="#8a8a8a" font-weight="normal" textLength="73" lengthAdjust="spacingAndGlyphs" >rectangleShape3</text>
<path d="M203 199.5 l5 -2.5 l5 2.5 l0 4 l-5 2.5 l-5 -2.5 z" fill="#1e6fb8"/><path d="M203 199.5 l5 2.5 l5 -2.5" fill="none" stroke="#7bb8ea" stroke-width="0.8"/><rect x="211" y="204.5" width="4" height="4" rx="1" fill="#333"/>
<text x="224" y="205.5" font-family="Liberation Sans" font-size="10" fill="#8a8a8a" font-weight="normal" textLength="73" lengthAdjust="spacingAndGlyphs" >rectangleShape4</text>
<path d="M203 215 l5 -2.5 l5 2.5 l0 4 l-5 2.5 l-5 -2.5 z" fill="#1e6fb8"/><path d="M203 215 l5 2.5 l5 -2.5" fill="none" stroke="#7bb8ea" stroke-width="0.8"/><rect x="211" y="220" width="4" height="4" rx="1" fill="#333"/>
<text x="224" y="221" font-family="Liberation Sans" font-size="10" fill="#8a8a8a" font-weight="normal" textLength="74" lengthAdjust="spacingAndGlyphs" >shapeContainer1</text>
<rect x="192.5" y="231.5" width="7" height="7" fill="#fff" stroke="#777"/><rect x="194" y="234.5" width="4" height="1" fill="#333"/>
<text x="203" y="239" font-family="Liberation Sans" font-size="10" fill="#222" font-weight="normal" textLength="42" lengthAdjust="spacingAndGlyphs" >Свойства</text>
<path d="M206 257.5 L211.5 252" stroke="#222" stroke-width="2.4" stroke-linecap="round"/><circle cx="212.5" cy="251" r="3" fill="#222"/><path d="M213 246.5 L213 250.5 L217 251" stroke="#fff" stroke-width="1.6" fill="none"/>
<text x="224" y="257.5" font-family="Liberation Sans" font-size="10" fill="#222" font-weight="normal" textLength="81" lengthAdjust="spacingAndGlyphs" >addressSpacePage</text>
<rect x="192.5" y="267.5" width="7" height="7" fill="#fff" stroke="#777"/><rect x="194" y="270.5" width="4" height="1" fill="#333"/>
<text x="203" y="276" font-family="Liberation Sans" font-size="10" fill="#222" font-weight="normal" textLength="37" lengthAdjust="spacingAndGlyphs" >Методы</text>
<circle cx="207" cy="288.5" r="4" fill="#f3f0fa" stroke="#6f55b0" stroke-width="1.3"/><path d="M207 286.5 v3.5 M205 291.0 l2 -1.5 l2 1.5" fill="none" stroke="#6f55b0" stroke-width="1"/>
<rect x="211.5" y="292.0" width="3.5" height="3" fill="#333"/><path d="M212.2 292.0 v-1 a1 1 0 0 1 2 0 v1" fill="none" stroke="#333" stroke-width="0.8"/>
<text x="224" y="293.5" font-family="Liberation Sans" font-size="10" fill="#9a9a9a" font-weight="normal" textLength="34" lengthAdjust="spacingAndGlyphs" >Dispose</text>
<circle cx="207" cy="304" r="4" fill="#f3f0fa" stroke="#6f55b0" stroke-width="1.3"/><path d="M207 302 v3.5 M205 306.5 l2 -1.5 l2 1.5" fill="none" stroke="#6f55b0" stroke-width="1"/>
<rect x="211.5" y="307.5" width="3.5" height="3" fill="#333"/><path d="M212.2 307.5 v-1 a1 1 0 0 1 2 0 v1" fill="none" stroke="#333" stroke-width="0.8"/>
<text x="224" y="309" font-family="Liberation Sans" font-size="10" fill="#9a9a9a" font-weight="normal" textLength="88" lengthAdjust="spacingAndGlyphs" >InitializeComponent</text>
<circle cx="207" cy="320" r="4" fill="#f3f0fa" stroke="#6f55b0" stroke-width="1.3"/><path d="M207 318 v3.5 M205 322.5 l2 -1.5 l2 1.5" fill="none" stroke="#6f55b0" stroke-width="1"/>
<rect x="211.5" y="323.5" width="3.5" height="3" fill="#333"/><path d="M212.2 323.5 v-1 a1 1 0 0 1 2 0 v1" fill="none" stroke="#333" stroke-width="0.8"/>
<text x="224" y="325" font-family="Liberation Sans" font-size="10" fill="#222" font-weight="normal" textLength="148" lengthAdjust="spacingAndGlyphs" >numericUpDown1_ValueChanged</text>
<circle cx="207" cy="335.5" r="4" fill="#f3f0fa" stroke="#6f55b0" stroke-width="1.3"/><path d="M207 333.5 v3.5 M205 338.0 l2 -1.5 l2 1.5" fill="none" stroke="#6f55b0" stroke-width="1"/>
<rect x="211.5" y="339.0" width="3.5" height="3" fill="#333"/><path d="M212.2 339.0 v-1 a1 1 0 0 1 2 0 v1" fill="none" stroke="#333" stroke-width="0.8"/>
<text x="224" y="340.5" font-family="Liberation Sans" font-size="10" fill="#222" font-weight="normal" textLength="101" lengthAdjust="spacingAndGlyphs" >rectangleShape2_Paint</text>
<circle cx="207" cy="351" r="4" fill="#f3f0fa" stroke="#6f55b0" stroke-width="1.3"/><path d="M207 349 v3.5 M205 353.5 l2 -1.5 l2 1.5" fill="none" stroke="#6f55b0" stroke-width="1"/>
<text x="224" y="356" font-family="Liberation Sans" font-size="10" fill="#222" font-weight="normal" textLength="156" lengthAdjust="spacingAndGlyphs" >VisualizerControl (+ 1 перегружен)</text>
<path d="M322 465 q1.5 1.5 3 0 t3 0 t3 0 t3 0 t3 0 t3 0 t3 0 t3 0 t3 0 t3 0 t3 0 t3 0 t3 0 t3 0 t3 0 t3 0 t3 0 t3 0 t3 0 t3 0 t3 0 t3 0 t3 0 t3 0 t3 0 t3 0 t3 0 t3 0 t3 0 t3 0 t3 0 t3 0 t3 0 t3 0" fill="none" stroke="#e04040" stroke-width="0.7"/>
<path d="M83 505 q1.5 1.5 3 0 t3 0 t3 0 t3 0 t3 0 t3 0 t3 0 t3 0 t3 0 t3 0 t3 0 t3 0 t3 0 t3 0 t3 0 t3 0 t3 0 t3 0" fill="none" stroke="#e04040" stroke-width="0.7"/>
<path d="M467 656 q1.5 1.5 3 0 t3 0 t3 0 t3 0 t3 0 t3 0 t3 0 t3 0 t3 0 t3 0 t3 0 t3 0 t3 0 t3 0 t3 0 t3 0 t3 0 t3 0 t3 0 t3 0 t3 0 t3 0 t3 0 t3 0 t3 0 t3 0 t3 0 t3 0 t3 0 t3 0" fill="none" stroke="#e04040" stroke-width="0.7"/>
<text x="190" y="596.5" font-family="Liberation Sans" font-size="10" fill="#111" font-weight="bold" textLength="28" lengthAdjust="spacingAndGlyphs" >12345</text>
<circle cx="225" cy="592" r="2.2" fill="#fff" stroke="#333" stroke-width="0.8"/>
<text x="385" y="596" font-family="Liberation Sans" font-size="9.5" fill="#333" font-weight="normal" textLength="26" lengthAdjust="spacingAndGlyphs" >10 000</text>
<path d="M418.5 591 L421.5 588 L424.5 591 M418.5 594 L421.5 597 L424.5 594" fill="none" stroke="#444" stroke-width="1.2"/>
<text x="434" y="596" font-family="Liberation Sans" font-size="9.5" fill="#333" font-weight="normal" textLength="20" lengthAdjust="spacingAndGlyphs" >9999</text>
<path d="M19 682 L19 691 L13 686.5 Z" fill="#333"/>
<path d="M609 682 L609 691 L615 686.5 Z" fill="#333"/>
<text x="16" y="708" font-family="Liberation Sans" font-size="11" fill="#454545" font-weight="normal" textLength="92" lengthAdjust="spacingAndGlyphs" >Страница: 58 из 74</text>
<text x="127" y="708" font-family="Liberation Sans" font-size="11" fill="#454545" font-weight="normal" textLength="91" lengthAdjust="spacingAndGlyphs" >Число слов: 12 519</text>
<path d="M235 706 L243 701 L252 706 L244 711 Z" fill="#e8eef8" stroke="#3a6ab8" stroke-width="1.2"/><path d="M245 698 L251 704 M251 698 L245 704" stroke="#e03030" stroke-width="1.8"/>
<rect x="375" y="700.0" width="8" height="1" fill="#555"/>
<rect x="375" y="702.5" width="8" height="1" fill="#555"/>
<rect x="375" y="705.0" width="8" height="1" fill="#555"/>
<rect x="375" y="707.5" width="8" height="1" fill="#555"/>
<rect x="375" y="699" width="9" height="11" fill="none" stroke="#555" stroke-width="0.8"/>
<path d="M391 700 h5 v11 h-5 z M397 700 h5 v11 h-5 z" fill="#f5f5f5" stroke="#666" stroke-width="0.9"/>
<rect x="407" y="699" width="10" height="9" fill="#f0f0f0" stroke="#666" stroke-width="0.9"/><circle cx="416" cy="709" r="3" fill="#2a8fc8"/>
<rect x="425" y="700.0" width="9" height="1" fill="#777"/>
<rect x="425" y="702.5" width="6" height="1" fill="#777"/>
<rect x="425" y="705.0" width="9" height="1" fill="#777"/>
<rect x="425" y="707.5" width="6" height="1" fill="#777"/>
<rect x="425" y="710.0" width="9" height="1" fill="#777"/>
<rect x="442" y="699.0" width="10" height="1" fill="#666"/>
<rect x="442" y="701.2" width="10" height="1" fill="#666"/>
<rect x="442" y="703.4" width="10" height="1" fill="#666"/>
<rect x="442" y="705.6" width="10" height="1" fill="#666"/>
<rect x="442" y="707.8" width="10" height="1" fill="#666"/>
<rect x="442" y="710.0" width="10" height="1" fill="#666"/>
<text x="465" y="709" font-family="Liberation Sans" font-size="11" fill="#454545" font-weight="normal" textLength="20" lengthAdjust="spacingAndGlyphs" >90%</text>
<circle cx="500" cy="704" r="7" fill="#f4f6f8" stroke="#777" stroke-width="1.2"/><rect x="496" y="703.3" width="8" height="1.6" fill="#333"/>
<path d="M547 697 h7 v9 l-3.5 3 l-3.5 -3 z" fill="#f5f6f8" stroke="#777"/>
<circle cx="608" cy="704" r="7" fill="#f4f6f8" stroke="#777" stroke-width="1.2"/><rect x="604" y="703.3" width="8" height="1.6" fill="#333"/><rect x="607.2" y="700" width="1.6" height="8" fill="#333"/>
<path d="M653 11.5 L656 10 L660.5 14 L668 7 L672.5 9 L672.5 23 L668 25 L660.5 18 L656 22 L653 20.5 Z" fill="#0a0a0a"/><path d="M655.5 13.8 L658.5 16 L655.5 18.2 Z" fill="#f4f4f6"/><path d="M663 16 L668.5 11.8 L668.5 20.2 Z" fill="#f4f4f6"/>
<text x="683" y="21.5" font-family="Liberation Sans" font-size="13" fill="#7a7a7a" font-weight="normal" textLength="255" lengthAdjust="spacingAndGlyphs" >Курсовая работа по СПО - Microsoft Visual Studio</text>
<text x="1001" y="19" font-family="Liberation Sans" font-size="12" fill="#717171" font-weight="normal" textLength="127" lengthAdjust="spacingAndGlyphs" >Быстрый запуск (Ctrl+Q)</text>
<circle cx="1176" cy="12" r="3.6" fill="none" stroke="#222" stroke-width="1.6"/><path d="M1173.5 14.5 L1169.5 18.5" stroke="#222" stroke-width="2.2"/>
<rect x="1232.5" y="8.5" width="8.5" height="8.5" fill="none" stroke="#111" stroke-width="1.3"/><rect x="1232" y="8" width="9.5" height="2.5" fill="#111"/>
<path d="M1264 9 L1272 17 M1272 9 L1264 17" stroke="#111" stroke-width="1.5"/>
<text x="652" y="43" font-family="Liberation Sans" font-size="12.5" fill="#1e1e1e" font-weight="normal" textLength="32" lengthAdjust="spacingAndGlyphs" >ФАЙЛ</text>
<text x="703" y="43" font-family="Liberation Sans" font-size="12.5" fill="#1e1e1e" font-weight="normal" textLength="43" lengthAdjust="spacingAndGlyphs" >ПРАВКА</text>
<text x="765" y="43" font-family="Liberation Sans" font-size="12.5" fill="#1e1e1e" font-weight="normal" textLength="23" lengthAdjust="spacingAndGlyphs" >ВИД</text>
<text x="807" y="43" font-family="Liberation Sans" font-size="12.5" fill="#1e1e1e" font-weight="normal" textLength="41" lengthAdjust="spacingAndGlyphs" >ПРОЕКТ</text>
<text x="867" y="43" font-family="Liberation Sans" font-size="12.5" fill="#1e1e1e" font-weight="normal" textLength="74" lengthAdjust="spacingAndGlyphs" >ПОСТРОЕНИЕ</text>
<text x="961" y="43" font-family="Liberation Sans" font-size="12.5" fill="#1e1e1e" font-weight="normal" textLength="51" lengthAdjust="spacingAndGlyphs" >ОТЛАДКА</text>
<text x="1031" y="43" font-family="Liberation Sans" font-size="12.5" fill="#1e1e1e" font-weight="normal" textLength="56" lengthAdjust="spacingAndGlyphs" >КОМАНДА</text>
<text x="1106" y="43" font-family="Liberation Sans" font-size="12.5" fill="#1e1e1e" font-weight="normal" textLength="20" lengthAdjust="spacingAndGlyphs" >SQL</text>
<text x="1145" y="43" font-family="Liberation Sans" font-size="12.5" fill="#1e1e1e" font-weight="normal" textLength="47" lengthAdjust="spacingAndGlyphs" >ФОРМАТ</text>
<text x="1211" y="43" font-family="Liberation Sans" font-size="12.5" fill="#1e1e1e" font-weight="normal" textLength="42" lengthAdjust="spacingAndGlyphs" >СЕРВИС</text>
<text x="652" y="62" font-family="Liberation Sans" font-size="12.5" fill="#1e1e1e" font-weight="normal" textLength="26" lengthAdjust="spacingAndGlyphs" >ТЕСТ</text>
<text x="697" y="62" font-family="Liberation Sans" font-size="12.5" fill="#1e1e1e" font-weight="normal" textLength="75" lengthAdjust="spacingAndGlyphs" >АРХИТЕКТУРА</text>
<text x="791" y="62" font-family="Liberation Sans" font-size="12.5" fill="#1e1e1e" font-weight="normal" textLength="46" lengthAdjust="spacingAndGlyphs" >АНАЛИЗ</text>
<text x="856" y="62" font-family="Liberation Sans" font-size="12.5" fill="#1e1e1e" font-weight="normal" textLength="32" lengthAdjust="spacingAndGlyphs" >ОКНО</text>
<text x="907" y="62" font-family="Liberation Sans" font-size="12.5" fill="#1e1e1e" font-weight="normal" textLength="50" lengthAdjust="spacingAndGlyphs" >СПРАВКА</text>
<circle cx="672.5" cy="80" r="6.3" fill="#1b4f8e"/><path d="M669 80 L673 76.5 L673 83.5 Z" fill="#fff"/><rect x="672" y="79" width="4" height="2" fill="#fff"/>
<path d="M685.5 79 L690.5 79 L688 82 Z" fill="#555"/>
<circle cx="704" cy="80" r="5.5" fill="none" stroke="#c8c8c8" stroke-width="2.5"/>
<rect x="728" y="73" width="6" height="8" fill="#fff" stroke="#333" stroke-width="1.2"/><rect x="731" y="77" width="7" height="9" fill="#fff" stroke="#333" stroke-width="1.2"/><rect x="727" y="72" width="3" height="3" fill="#d8a030"/>
<path d="M746.5 79 L751.5 79 L749 82 Z" fill="#555"/>
<path d="M759 78 h5 l1.5 2 h6 v8 h-12.5 z" fill="#222"/><path d="M762 76 q3 -4 7 -1" fill="none" stroke="#1c6fc0" stroke-width="1.8"/>
<path d="M780 73 h10 l2 2 v11 h-12 z" fill="#222"/><rect x="783" y="73" width="6" height="4" fill="#eeeef2"/>
<path d="M805 72 h7 l1.5 1.5 v7 h-8.5 z" fill="#222"/><path d="M800 78 h7 l1.5 1.5 v7 h-8.5 z" fill="#222"/><rect x="807" y="72" width="3" height="2.5" fill="#eeeef2"/><rect x="802" y="78" width="3" height="2.5" fill="#eeeef2"/>
<path d="M831 76 L831 81 L836 81" fill="none" stroke="#c4c4c4" stroke-width="2"/><path d="M831 81 Q835 73 839 78 Q840 83 836 86" fill="none" stroke="#c4c4c4" stroke-width="2"/>
<path d="M848.5 79 L853.5 79 L851 82 Z" fill="#bbb"/>
<path d="M874 76 L874 81 L869 81" fill="none" stroke="#c4c4c4" stroke-width="2"/><path d="M874 81 Q870 73 866 78 Q865 83 869 86" fill="none" stroke="#c4c4c4" stroke-width="2"/>
<path d="M882.5 79 L887.5 79 L885 82 Z" fill="#bbb"/>
<path d="M905 73 L913 79.5 L905 86 Z" fill="#2e8b2e"/>
<text x="920" y="85" font-family="Liberation Sans" font-size="12" fill="#1e1e1e" font-weight="normal" textLength="36" lengthAdjust="spacingAndGlyphs" >Запуск</text>
<path d="M961.5 79 L966.5 79 L964 82 Z" fill="#555"/>
<text x="977" y="84" font-family="Liberation Sans" font-size="12" fill="#1e1e1e" font-weight="normal" textLength="34" lengthAdjust="spacingAndGlyphs" >Debug</text>
<path d="M1023 78.5 L1028 78.5 L1025.5 81.5 Z" fill="#555"/>
<rect x="1053" y="73" width="9" height="8" fill="#222"/><circle cx="1052" cy="82" r="3.3" fill="none" stroke="#1c6fc0" stroke-width="1.8"/><path d="M1049.5 84.5 L1047 87" stroke="#1c6fc0" stroke-width="2"/>
<rect x="1068" y="85" width="5" height="1" fill="#555"/><path d="M1068 87 L1073 87 L1070.5 90 Z" fill="#555"/>
<path d="M1095 72 v16 M1089 76 h12 M1091 82 h8" stroke="#b5b5b5" stroke-width="1.6"/>
<path d="M1119 73 v14 M1121 76.5 h7 M1121 83.5 h5" stroke="#c2c2c6" stroke-width="1.6" fill="none"/>
<path d="M1146.5 73 v14 M1141 76.5 h11 M1143 83.5 h7" stroke="#c2c2c6" stroke-width="1.6" fill="none"/>
<path d="M1171 73 v14 M1161 76.5 h8 M1164 83.5 h5" stroke="#c2c2c6" stroke-width="1.6" fill="none"/>
<path d="M1179 73.5 h11 M1182 75 v11 M1187 75 v7" stroke="#c2c2c6" stroke-width="1.6" fill="none"/>
<path d="M1203 80 h11 M1206 73 v14 M1211 75 v10" stroke="#c2c2c6" stroke-width="1.6" fill="none"/>
<path d="M1221 86.5 h13 M1224 73 v12 M1230 77 v8" stroke="#c2c2c6" stroke-width="1.6" fill="none"/>
<rect x="1250" y="72" width="1.5" height="1.5" fill="#555"/><rect x="1254" y="72" width="1.5" height="1.5" fill="#555"/><rect x="1250" y="84" width="6" height="1" fill="#555"/><path d="M1250 86 L1256 86 L1253 89 Z" fill="#555"/>
<text font-family="Liberation Sans" font-size="12" fill="#444" transform="translate(653,99) rotate(90)" textLength="96" lengthAdjust="spacingAndGlyphs">Источники данных</text>
<text font-family="Liberation Sans" font-size="12" fill="#444" transform="translate(653,208) rotate(90)" textLength="95" lengthAdjust="spacingAndGlyphs">Панель элементов</text>
<text font-family="Liberation Sans" font-size="12" fill="#444" transform="translate(1263,99) rotate(90)" textLength="123" lengthAdjust="spacingAndGlyphs">Обозреватель решений</text>
<text font-family="Liberation Sans" font-size="12" fill="#444" transform="translate(1263,233) rotate(90)" textLength="134" lengthAdjust="spacingAndGlyphs">Командный обозреватель</text>
<text x="675" y="113.5" font-family="Liberation Sans" font-size="12.5" fill="#fff" font-weight="normal" textLength="173" lengthAdjust="spacingAndGlyphs" >VisualizerControl.cs [Конструктор]</text>
<path d="M857 108.5 h4 M861 104.5 v8" stroke="#e8f4ff" stroke-width="1.4"/><rect x="861.5" y="105.8" width="3.5" height="5" fill="none" stroke="#e8f4ff" stroke-width="1.4"/>
<path d="M874.5 104.5 L883 112.5 M883 104.5 L874.5 112.5" stroke="#e8f4ff" stroke-width="1.9"/>
<text x="892" y="113.5" font-family="Liberation Sans" font-size="12.5" fill="#1e1e1e" font-weight="normal" textLength="93" lengthAdjust="spacingAndGlyphs" >ClassDiagram1.cd*</text>
<text x="1059" y="113.5" font-family="Liberation Sans" font-size="12.5" fill="#717171" font-weight="normal" textLength="141" lengthAdjust="spacingAndGlyphs" >VisualizerControl.Designer.cs</text>
<path d="M1212 105 h6 v5 h3 M1213 104 v8" stroke="#444" stroke-width="1.8" fill="none"/>
<path d="M1229 104 L1237 112 M1237 104 L1229 112" stroke="#555" stroke-width="1.4"/>
<path d="M1245 107 L1251 107 L1248 110 Z" fill="#555"/>
<text x="671" y="688.5" font-family="Liberation Sans" font-size="12" fill="#505050" font-weight="normal" textLength="84" lengthAdjust="spacingAndGlyphs" >Список ошибок</text>
<text x="646" y="716" font-family="Liberation Sans" font-size="12.5" fill="#fff" font-weight="normal" textLength="35" lengthAdjust="spacingAndGlyphs" stroke="#fff" stroke-width="0.35">Готово</text>
<path d="M683.5 131.5 H1191.5 V173.5 H683.5 Z" fill="none" stroke="#8a8a8a" stroke-width="1" stroke-dasharray="1 1" shape-rendering="crispEdges"/>
<text x="699" y="154.3" font-family="Liberation Sans" font-size="12" fill="#111" font-weight="normal" textLength="25" lengthAdjust="spacingAndGlyphs" >1024</text>
<rect x="1051" y="140" width="56" height="19" fill="#fff" stroke="#d0d0d0"/>
<text x="1053" y="153.5" font-family="Liberation Sans" font-size="12" fill="#111" font-weight="normal" textLength="5" lengthAdjust="spacingAndGlyphs" >0</text>
<path d="M1112 148 L1115.5 144.5 L1119 148 Z M1112 152 L1115.5 155.5 L1119 152 Z" fill="#8080b0"/>
<text x="1136" y="154.3" font-family="Liberation Sans" font-size="12" fill="#111" font-weight="normal" textLength="25" lengthAdjust="spacingAndGlyphs" >1024</text>
<circle cx="1192" cy="152.5" r="3.3" fill="#fff" stroke="#111" stroke-width="1.2"/>
<circle cx="1192" cy="173.5" r="3.3" fill="#fff" stroke="#111" stroke-width="1.2"/>
<circle cx="937" cy="173.5" r="3.3" fill="#fff" stroke="#111" stroke-width="1.2"/>
</svg>
<div class="a" style="left:7px;top:130.5px;width:610px;height:6px;background:linear-gradient(#cdd1d6,#dcdfe3)"></div>
</body></html>
